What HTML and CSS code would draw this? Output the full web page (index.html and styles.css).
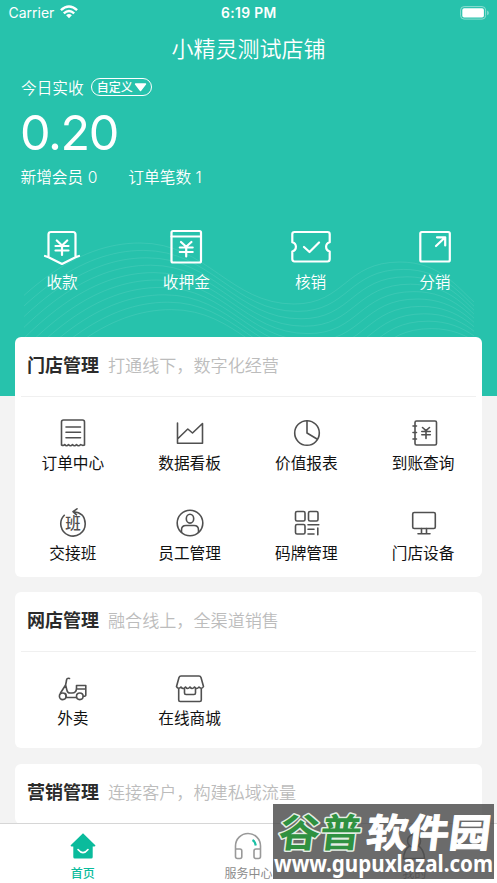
FILE: index.html
```html
<!DOCTYPE html>
<html lang="zh-CN">
<head>
<meta charset="utf-8">
<title>小精灵测试店铺</title>
<link rel="stylesheet" href="styles.css">
</head>
<body>
<div class="app">
  <main class="content">
    <section class="hero">
      <svg class="waves" width="450" height="97" viewBox="24 240 450 97">
        <defs><path id="wave" d="M-40 365C20 290 75 243 140 243C207 243 230 304 294 304C345 304 345 262 400 262C440 262 458 288 474 302L510 340"/></defs>
        <use href="#wave"/><use href="#wave" x="3.5" y="7.4"/><use href="#wave" x="7" y="14.8"/><use href="#wave" x="10.5" y="22.2"/><use href="#wave" x="14" y="29.6"/><use href="#wave" x="17.5" y="37"/><use href="#wave" x="21" y="44.4"/><use href="#wave" x="24.5" y="51.8"/><use href="#wave" x="28" y="59.2"/><use href="#wave" x="31.5" y="66.6"/>
      </svg>
      <div class="status">
        <span class="carrier">Carrier
          <svg width="18" height="14" viewBox="0 0 18 14"><g fill="none" stroke="#fff" stroke-width="2.4"><path d="M.9 5.2Q9-2.4 17.1 5.2"/><path d="M3.8 8.3Q9 3.6 14.2 8.3"/></g><path d="M9 13.2L6.1 10.3Q9 7.9 11.9 10.3Z" fill="#fff"/></svg>
        </span>
        <span class="time">6:19 PM</span>
        <svg class="battery" width="29" height="14" viewBox="0 0 29 14"><rect x=".6" y=".6" width="25" height="12.5" rx="3.5" fill="none" stroke="#8eded2"/><rect x="2.3" y="2.3" width="21.6" height="9.2" rx="1.8" fill="#fff"/><path d="M27.2 4.6Q28.8 5.3 28.8 6.9T27.2 9.2Z" fill="#8eded2"/></svg>
      </div>
      <h1 class="title">小精灵测试店铺</h1>
      <div class="today">今日实收 <span class="pill">自定义<svg width="13" height="9" viewBox="0 0 13 9"><path d="M1.5 1H11.5L6.5 7.5Z" fill="#fff" stroke="#fff" stroke-width="1.4" stroke-linejoin="round"/></svg></span></div>
      <div class="amount">0.20</div>
      <div class="stats"><span>新增会员 0</span><span>订单笔数 1</span></div>
      <div class="actions">
        <div class="action">
          <svg width="40" height="40" viewBox="0 0 40 40"><path d="M6.5 29V6.5Q6.5 4 9 4H31Q33.500 4 33.500 6.500V29M3 28L6.5 29.200L20 36L33.500 29.200L37 28"/><path d="M14.800 12.500L20 17.500L25.200 12.500M13.500 18H26.500M13.500 22.500H26.500M20 17.500V27"/></svg>
          <span>收款</span>
        </div>
        <div class="action">
          <svg width="40" height="40" viewBox="0 0 40 40"><rect x="5.500" y="3" width="29.500" height="31.500" rx="1.500"/><path d="M5.500 8.500H35M15 14L20.200 18.800L25.400 14M13.800 19.500H26.700M13.800 24H26.700M20.200 19V28.500"/></svg>
          <span>收押金</span>
        </div>
        <div class="action">
          <svg width="40" height="40" viewBox="0 0 40 40"><path d="M3.500 4H36.500Q38.700 4 38.700 6.200V14.200A4.800 4.800 0 0 0 38.700 23.500V31Q38.700 33.500 36.500 33.500H3.500Q1.300 33.500 1.300 31V23.500A4.800 4.800 0 0 0 1.300 14.200V6.200Q1.300 4 3.500 4ZM13 19L18.500 24L28 14.500"/></svg>
          <span>核销</span>
        </div>
        <div class="action">
          <svg width="40" height="40" viewBox="0 0 40 40"><rect x="5.300" y="4" width="29.500" height="29.500" rx="1.500"/><path d="M21 18L30 9.500M22 9.300H30.200V17.500"/></svg>
          <span>分销</span>
        </div>
      </div>
    </section>

    <section class="card">
      <header class="card-head"><h2>门店管理</h2><p>打通线下，数字化经营</p></header>
      <div class="grid">
        <div class="item">
          <svg width="34" height="34" viewBox="0 0 34 34"><path d="M5.500 29V6Q5.500 4 7.500 4H26.500Q28.500 4 28.500 6V29Q26.500 30 24.700 28.500Q22.500 31 20.500 28.500Q18.500 31 16.500 28.500Q14.500 31 12.500 28.500Q10.500 31 8.800 28.500Q7.500 30 5.500 29ZM10 11H24.500M10 16.300H24.500M10 21.700H24.500"/></svg>
          <span>订单中心</span>
        </div>
        <div class="item">
          <svg width="34" height="34" viewBox="0 0 34 34"><path d="M4.500 7V27.300H29.500V7.500L19.500 17L14.800 13L5 22.500"/></svg>
          <span>数据看板</span>
        </div>
        <div class="item">
          <svg width="34" height="34" viewBox="0 0 34 34"><circle cx="17" cy="17" r="12.300"/><path d="M17 4.700V17L27 23"/></svg>
          <span>价值报表</span>
        </div>
        <div class="item">
          <svg width="34" height="34" viewBox="0 0 34 34"><rect x="8" y="5" width="21.500" height="24" rx="1.500"/><path d="M6 10H9.500M6 16.500H9.500M6 23H9.500M15.500 11.500L19 14.700L22.500 11.500M14.800 15.500H23.300M14.800 18.800H23.300M19 15V22.500"/></svg>
          <span>到账查询</span>
        </div>
        <div class="item">
          <svg width="34" height="34" viewBox="0 0 34 34"><path d="M8.300 9.300A12.200 12.200 0 1 0 29.200 17.500Q28.800 6.500 17.500 5.700M21 2.800L17 5.600L20.500 8.800"/><text x="17" y="23" textLength="15.500" lengthAdjust="spacingAndGlyphs">班</text></svg>
          <span>交接班</span>
        </div>
        <div class="item">
          <svg width="34" height="34" viewBox="0 0 34 34"><circle cx="17" cy="17" r="12.800"/><ellipse cx="17" cy="12.700" rx="3.700" ry="4.400"/><path d="M8.500 26.500V24Q8.500 19.500 13 19.500H21Q25.500 19.500 25.500 24V26.500"/></svg>
          <span>员工管理</span>
        </div>
        <div class="item">
          <svg width="34" height="34" viewBox="0 0 34 34"><rect x="5.500" y="5.500" width="9.500" height="9.500" rx="1.500"/><rect x="18.500" y="5.500" width="9.500" height="9.500" rx="1.500"/><rect x="5.500" y="18.500" width="9.500" height="9.500" rx="1.500"/><path d="M18 18.800H28.800M18 23.300H24M18 28H24M27.800 22V28.800"/></svg>
          <span>码牌管理</span>
        </div>
        <div class="item">
          <svg width="34" height="34" viewBox="0 0 34 34"><rect x="5.700" y="6.500" width="22.600" height="16" rx="1.500"/><path d="M14.500 22.500V27.500M19.500 22.500V27.500M11 27.700H23"/></svg>
          <span>门店设备</span>
        </div>
      </div>
    </section>

    <section class="card">
      <header class="card-head"><h2>网店管理</h2><p>融合线上，全渠道销售</p></header>
      <div class="grid grid-tall">
        <div class="item">
          <svg width="34" height="34" viewBox="0 0 34 34"><circle cx="6.700" cy="25.300" r="3.300"/><circle cx="23.800" cy="25.300" r="3.300"/><path d="M13.500 7.500Q10.500 6.700 10.500 9.500L9.600 14L4.500 22M9.600 14L11 19.500Q11.500 22 14 22H16Q20.500 22 20.500 17V14.500H29.800V18H20.500M29.800 18V24Q29.800 25.300 27.500 25.300M9.500 22.500L10.500 26.500H20.500"/></svg>
          <span>外卖</span>
        </div>
        <div class="item">
          <svg width="34" height="34" viewBox="0 0 34 34"><path transform="translate(0 1)" d="M8 4H26Q27.500 4 28 5.500L30.500 14.500Q28.800 17.800 26 15Q23.500 18 21.500 15Q19 18 17 15Q14.500 18 12.500 15Q10 18 8 15Q5.300 17.800 3.500 14.500L6 5.500Q6.500 4 8 4ZM5.700 17V28Q5.700 29.500 7.200 29.500H26.800Q28.300 29.500 28.300 28V17M11.500 17V21Q11.500 22.500 13 22.500H21Q22.500 22.500 22.500 21V17"/></svg>
          <span>在线商城</span>
        </div>
      </div>
    </section>

    <section class="card">
      <header class="card-head"><h2>营销管理</h2><p>连接客户，构建私域流量</p></header>
    </section>
  </main>

  <nav class="tabs">
    <div class="tab active">
      <svg width="32" height="30" viewBox="0 0 32 30"><path d="M16 1.300L28.300 13.200Q28.800 14.300 27.500 14.500H25.700V25Q25.700 26.500 24.200 26.500H7.800Q6.300 26.500 6.300 25V14.500H4.500Q3.200 14.300 3.700 13.200Z" fill="#0abb9c"/><path d="M11 17.500Q16 23.700 21 17.500" fill="none" stroke="#fff" stroke-width="1.600" stroke-linecap="round"/></svg>
      <span>首页</span>
    </div>
    <div class="tab">
      <svg width="32" height="30" viewBox="0 0 32 30" fill="none" stroke="#999" stroke-width="1.600"><path d="M3.500 18V14A12.300 12.300 0 0 1 28.500 14V18M3.500 17H8Q9.800 17 9.800 19V24.500Q9.800 26.500 8 26.500H5.500Q3.500 26.500 3.500 24.500ZM28.500 17H24Q22 17 22 19V24.500Q22 26.500 24 26.500H26.500Q28.500 26.500 28.500 24.500Z"/><path d="M20.500 8Q23.300 9.500 23.800 13.500" stroke="#1bc0a5" stroke-width="2.200"/></svg>
      <span>服务中心</span>
    </div>
    <div class="tab">
      <svg width="32" height="30" viewBox="0 0 32 30" fill="none" stroke="#777" stroke-width="1.600"><circle cx="16" cy="9" r="6.500"/><path d="M11.500 14Q6 17.500 5.500 26.500H26.500Q26 17.500 20.500 14"/></svg>
      <span>我的</span>
    </div>
  </nav>

  <aside class="watermark">
    <svg width="221" height="75" viewBox="0 0 221 75">
      <g transform="translate(0 43) skewX(-7)" class="brand">
        <text class="brand-green" x="4" y="0" textLength="83" lengthAdjust="spacingAndGlyphs">谷普</text>
        <text class="brand-white" x="92" y="0" textLength="124" lengthAdjust="spacingAndGlyphs">软件园</text>
      </g>
      <text class="site" x="1" y="68" textLength="219" lengthAdjust="spacingAndGlyphs">www.gupuxlazal.com</text>
    </svg>
  </aside>
</div>
</body>
</html>
```
FILE: styles.css
```css
* { box-sizing: border-box; margin: 0; padding: 0; }
body {
  width: 497px;
  height: 883px;
  overflow: hidden;
  font-family: Inter, "Noto Sans CJK SC", sans-serif;
}
svg { display: block; flex: none; }
.app { position: relative; height: 883px; display: flex; flex-direction: column; }
.content {
  flex: 1;
  min-height: 0;
  overflow: hidden;
  background: linear-gradient(#27c2ac 396px, #f3f3f3 396px);
}

.hero { position: relative; height: 337px; color: #fff; }
.waves { position: absolute; left: 24px; bottom: 0; fill: none; stroke: #fff; stroke-opacity: .09; stroke-width: 1; }
.status {
  display: grid;
  grid-template-columns: 1fr auto 1fr;
  align-items: center;
  height: 26px;
  padding: 0 8px 0 8.5px;
  font-size: 14px;
  line-height: 26px;
}
.carrier { display: flex; align-items: center; gap: 6px; }
.carrier svg { margin-top: -2px; }
.time { font-weight: 600; font-size: 13.800px; letter-spacing: .35px; }
.battery { justify-self: end; margin-top: -1px; }
.title { font-size: 22px; font-weight: 350; line-height: 32px; text-align: center; margin-top: 7px; }
.today {
  display: flex;
  align-items: center;
  height: 24px;
  margin: 10px 0 0 21px;
  font-size: 15.700px;
  font-weight: 350;
}
.pill {
  display: flex;
  align-items: center;
  gap: 1px;
  height: 18px;
  margin-left: 7px;
  padding: 1px 4px 0 5px;
  border: 1.500px solid #fff;
  border-radius: 9px;
  font-size: 12px;
  font-weight: 500;
  line-height: 15px;
}
.amount { height: 60px; margin: 4px 0 0 20px; font-size: 48.500px; line-height: 60px; letter-spacing: -1.400px; }
.stats { display: flex; gap: 31px; margin: 3px 0 0 20.500px; font-size: 15.700px; font-weight: 350; line-height: 24px; }
.actions { display: grid; grid-template-columns: repeat(4, 1fr); margin-top: 38px; }
.action { display: flex; flex-direction: column; align-items: center; font-size: 15.700px; font-weight: 350; line-height: 24px; }
.action svg { margin-bottom: 3px; fill: none; stroke: #fff; stroke-width: 2.200; stroke-linecap: round; stroke-linejoin: round; }

.card { margin: 0 15px 15px; background: #fff; border-radius: 6px; }
.card:nth-of-type(3) { margin-bottom: 16px; }
.card-head {
  display: flex;
  align-items: center;
  gap: 9px;
  height: 60px;
  margin: 0 6px;
  padding: 0 6px 1px;
  border-bottom: 1px solid #f0f0f0;
}
.card-head h2 { font-size: 18px; font-weight: 600; line-height: 28px; color: #2b2b2b; }
.card-head p { font-size: 17.100px; font-weight: 350; line-height: 28px; color: #bcbcbc; }
.grid { display: grid; grid-template-columns: repeat(4, 1fr); grid-auto-rows: 90px; }
.grid-tall { grid-auto-rows: 96px; }
.item { display: flex; flex-direction: column; align-items: center; padding-top: 19px; font-size: 15.700px; line-height: 22px; color: #111; }
.item svg { margin-bottom: 3px; fill: none; stroke: #505050; stroke-width: 1.600; stroke-linecap: round; stroke-linejoin: round; }
.item span { margin-left: -1px; }
.item text { fill: #505050; stroke: none; font-size: 15.500px; font-weight: 500; text-anchor: middle; }

.tabs { display: grid; grid-template-columns: repeat(3, 1fr); height: 60px; border-top: 1px solid #d6d6d6; background: #fff; }
.tab { display: flex; flex-direction: column; align-items: center; padding-top: 8px; font-size: 12px; line-height: 18px; color: #8c8c8c; }
.tab svg { margin-bottom: 3px; }
.active { color: #0abb9c; font-weight: 500; }

.watermark { position: absolute; left: 273px; top: 804px; width: 221px; height: 75px; background: rgba(70, 70, 70, .8); }
.watermark svg { overflow: visible; }
.brand text { font-family: "Noto Sans CJK SC", sans-serif; font-size: 39px; font-weight: 700; paint-order: stroke; stroke-linejoin: round; }
.brand-green { fill: #2f9140; stroke: #e4eee4; stroke-width: 3px; }
.brand-white { fill: #fff; stroke: #fff; stroke-width: 1px; }
.site { font-family: "Noto Sans", "Open Sans", sans-serif; font-size: 23px; font-weight: 700; fill: #fff; }
```
